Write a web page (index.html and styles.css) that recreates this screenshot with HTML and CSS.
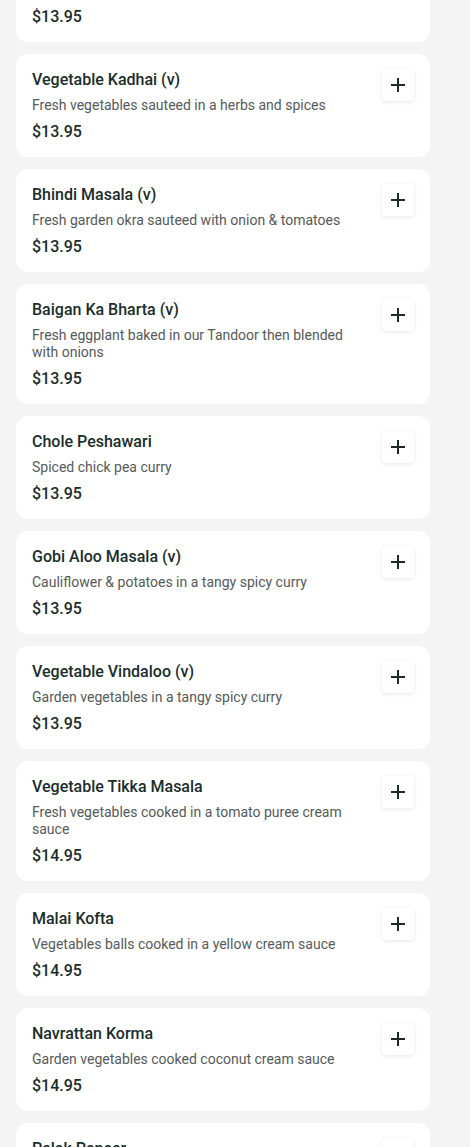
FILE: index.html
```html
<!DOCTYPE html>
<html lang="en">
<head>
    <meta charset="UTF-8">
    <meta name="viewport" content="width=device-width, initial-scale=1.0">
    <title>Menu - Vegetarian</title>
    <link rel="stylesheet" href="styles.css">
</head>
<body>
    <div class="menu-list">
        <div class="menu-item">
            <div class="item-info">
                <div class="item-name">Vegetable Jalfrezi (v)</div>
                <div class="item-desc">Fresh vegetables cooked with peppers and onions</div>
                <div class="item-price">$13.95</div>
            </div>
            <button class="add-btn" aria-label="Add"><svg viewBox="0 0 24 24"><path d="M19 13h-6v6h-2v-6H5v-2h6V5h2v6h6v2z"/></svg></button>
        </div>

        <div class="menu-item">
            <div class="item-info">
                <div class="item-name">Vegetable Kadhai (v)</div>
                <div class="item-desc">Fresh vegetables sauteed in a herbs and spices</div>
                <div class="item-price">$13.95</div>
            </div>
            <button class="add-btn" aria-label="Add"><svg viewBox="0 0 24 24"><path d="M19 13h-6v6h-2v-6H5v-2h6V5h2v6h6v2z"/></svg></button>
        </div>

        <div class="menu-item">
            <div class="item-info">
                <div class="item-name">Bhindi Masala (v)</div>
                <div class="item-desc">Fresh garden okra sauteed with onion &amp; tomatoes</div>
                <div class="item-price">$13.95</div>
            </div>
            <button class="add-btn" aria-label="Add"><svg viewBox="0 0 24 24"><path d="M19 13h-6v6h-2v-6H5v-2h6V5h2v6h6v2z"/></svg></button>
        </div>

        <div class="menu-item">
            <div class="item-info">
                <div class="item-name">Baigan Ka Bharta (v)</div>
                <div class="item-desc">Fresh eggplant baked in our Tandoor then blended with onions</div>
                <div class="item-price">$13.95</div>
            </div>
            <button class="add-btn" aria-label="Add"><svg viewBox="0 0 24 24"><path d="M19 13h-6v6h-2v-6H5v-2h6V5h2v6h6v2z"/></svg></button>
        </div>

        <div class="menu-item">
            <div class="item-info">
                <div class="item-name">Chole Peshawari</div>
                <div class="item-desc">Spiced chick pea curry</div>
                <div class="item-price">$13.95</div>
            </div>
            <button class="add-btn" aria-label="Add"><svg viewBox="0 0 24 24"><path d="M19 13h-6v6h-2v-6H5v-2h6V5h2v6h6v2z"/></svg></button>
        </div>

        <div class="menu-item">
            <div class="item-info">
                <div class="item-name">Gobi Aloo Masala (v)</div>
                <div class="item-desc">Cauliflower &amp; potatoes in a tangy spicy curry</div>
                <div class="item-price">$13.95</div>
            </div>
            <button class="add-btn" aria-label="Add"><svg viewBox="0 0 24 24"><path d="M19 13h-6v6h-2v-6H5v-2h6V5h2v6h6v2z"/></svg></button>
        </div>

        <div class="menu-item">
            <div class="item-info">
                <div class="item-name">Vegetable Vindaloo (v)</div>
                <div class="item-desc">Garden vegetables in a tangy spicy curry</div>
                <div class="item-price">$13.95</div>
            </div>
            <button class="add-btn" aria-label="Add"><svg viewBox="0 0 24 24"><path d="M19 13h-6v6h-2v-6H5v-2h6V5h2v6h6v2z"/></svg></button>
        </div>

        <div class="menu-item">
            <div class="item-info">
                <div class="item-name">Vegetable Tikka Masala</div>
                <div class="item-desc">Fresh vegetables cooked in a tomato puree cream sauce</div>
                <div class="item-price">$14.95</div>
            </div>
            <button class="add-btn" aria-label="Add"><svg viewBox="0 0 24 24"><path d="M19 13h-6v6h-2v-6H5v-2h6V5h2v6h6v2z"/></svg></button>
        </div>

        <div class="menu-item">
            <div class="item-info">
                <div class="item-name">Malai Kofta</div>
                <div class="item-desc">Vegetables balls cooked in a yellow cream sauce</div>
                <div class="item-price">$14.95</div>
            </div>
            <button class="add-btn" aria-label="Add"><svg viewBox="0 0 24 24"><path d="M19 13h-6v6h-2v-6H5v-2h6V5h2v6h6v2z"/></svg></button>
        </div>

        <div class="menu-item">
            <div class="item-info">
                <div class="item-name">Navrattan Korma</div>
                <div class="item-desc">Garden vegetables cooked coconut cream sauce</div>
                <div class="item-price">$14.95</div>
            </div>
            <button class="add-btn" aria-label="Add"><svg viewBox="0 0 24 24"><path d="M19 13h-6v6h-2v-6H5v-2h6V5h2v6h6v2z"/></svg></button>
        </div>

        <div class="menu-item">
            <div class="item-info">
                <div class="item-name">Palak Paneer</div>
                <div class="item-desc">Fresh spinach cooked with homemade cheese cubes</div>
                <div class="item-price">$14.95</div>
            </div>
            <button class="add-btn" aria-label="Add"><svg viewBox="0 0 24 24"><path d="M19 13h-6v6h-2v-6H5v-2h6V5h2v6h6v2z"/></svg></button>
        </div>
    </div>
</body>
</html>
```

FILE: styles.css
```css
:root {
    --page-bg: #f4f4f4;
    --card-bg: #ffffff;
    --text-dark: #1a2d2c;
    --text-muted: #555a5b;
}

body {
    font-family: Roboto, 'Noto Sans', Arial, sans-serif;
    background-color: var(--page-bg);
    margin: 0;
    overflow: hidden;
}

/* page is scrolled part way, first card sits above the fold */
.menu-list {
    width: 414px;
    margin: -61px 0 0 16px;
    display: flex;
    flex-direction: column;
    gap: 12px;
}

.menu-item {
    background-color: var(--card-bg);
    border-radius: 12px;
    padding: 16px 16px 15px;
    display: flex;
    align-items: flex-start;
    gap: 16px;
}

.item-info {
    flex: 1;
    min-width: 0;
}

.item-name {
    font-size: 16px;
    line-height: 20px;
    font-weight: 500;
    color: var(--text-dark);
}

.item-desc {
    margin-top: 7px;
    font-size: 14px;
    line-height: 17px;
    color: var(--text-muted);
}

.item-price {
    margin-top: 8px;
    font-size: 16px;
    line-height: 20px;
    font-weight: 500;
    color: var(--text-dark);
}

.add-btn {
    flex: none;
    width: 32px;
    height: 32px;
    margin-top: -1px;
    padding: 0;
    border: none;
    border-radius: 4px;
    background-color: var(--card-bg);
    box-shadow: 0 1px 4px rgba(0, 0, 0, 0.1);
    display: flex;
    align-items: center;
    justify-content: center;
    cursor: pointer;
}

.add-btn svg {
    width: 24px;
    height: 24px;
    fill: var(--text-dark);
}
```
